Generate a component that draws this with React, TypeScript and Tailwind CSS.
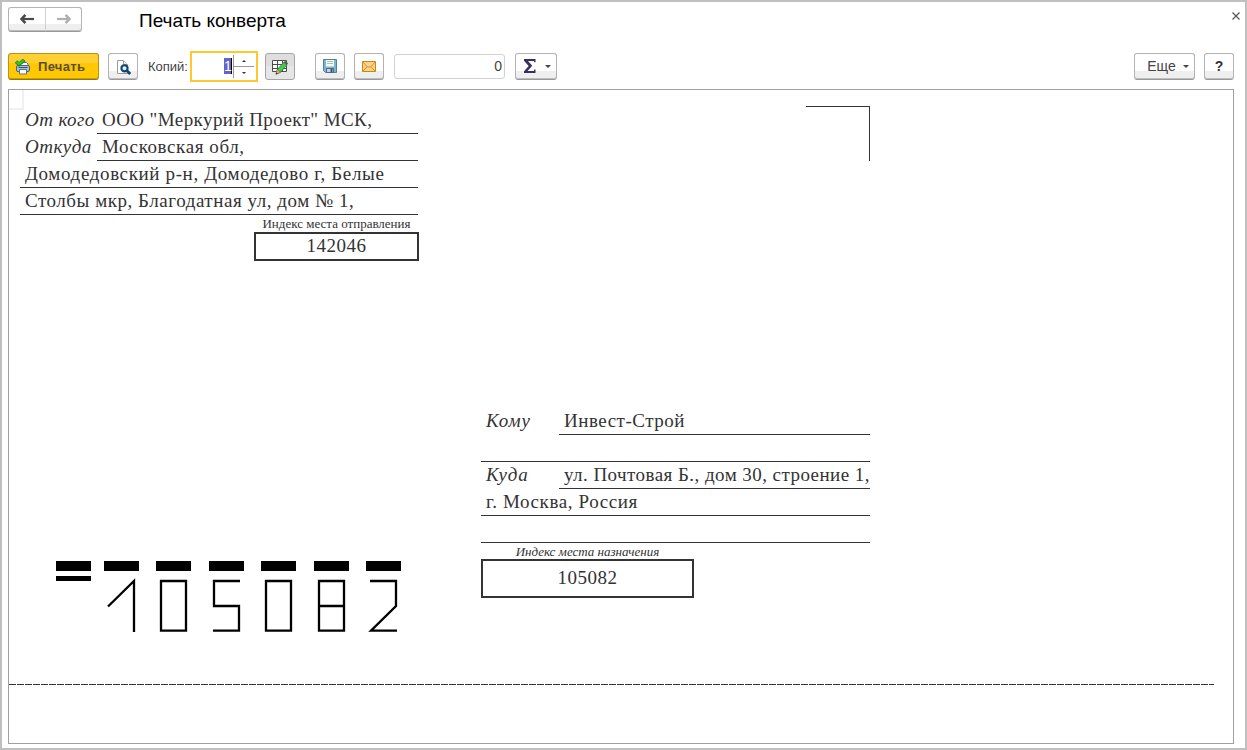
import type { ReactNode } from "react";

const BTN =
  "flex h-[27px] shrink-0 items-center justify-center rounded-[3px] border border-[#b3b3b3] border-b-[#999] bg-[linear-gradient(to_bottom,#fff_0,#fff_70%,#efefef_70%,#efefef_100%)] shadow-[inset_0_-1px_0_#bdbdbd]";

function PrintIcon() {
  return (
    <svg width="16" height="16" viewBox="0 0 16 16" fill="none">
      <path d="M4.5 7V3.5h7l1.5 1.5V7" fill="#fff" stroke="#5d7288" />
      <rect x="1.5" y="6.5" width="13" height="6" rx="1.5" fill="#a9c0d5" stroke="#476581" />
      <path d="M3.5 8.5h9" stroke="#3c556e" />
      <path d="M4.5 10.5h7v4.5h-7z" fill="#fff" stroke="#58708a" />
      <path d="M1 2.5 4 5.3 9.3.8" stroke="#178514" strokeWidth="3.6" />
      <path d="M1.3 2.7 4 5 9 1" stroke="#3fc92a" strokeWidth="1.8" />
    </svg>
  );
}

function PreviewIcon() {
  return (
    <svg width="16" height="16" viewBox="0 0 16 16" fill="none">
      <path d="M2.5 1.5h6l4 4v9h-10z" fill="#fff" stroke="#9a9a9a" />
      <path d="M8.5 1.5v4h4" fill="#eee" stroke="#9a9a9a" />
      <circle cx="9.5" cy="9.3" r="3.1" fill="#e4f0fa" stroke="#104470" strokeWidth="2.1" />
      <path d="m11.8 11.6 3.4 3.4" stroke="#104470" strokeWidth="2.8" />
    </svg>
  );
}

function EditTableIcon() {
  return (
    <svg width="17" height="16" viewBox="0 0 17 16" fill="none" className="-translate-x-px">
      <path d="M1.5 1.5h14v11h-14zM1.5 5.5h14M1.5 9.5h14M6.5 1.5v11M11.5 1.5v11" fill="#fff" stroke="#4c4c4c" />
      <path d="M5 15.2 6.3 10.5 12.8 3.2 16 6 9.3 13.4z" fill="#47c653" stroke="#2b7b34" strokeWidth=".8" />
      <path d="m12.8 3.2 1.3-1.4L17 4.3 16 6z" fill="#4f5a55" />
      <path d="m5 15.2 1.3-4.7 3 2.9z" fill="#e8b087" stroke="#9b6239" strokeWidth=".6" />
      <path d="m5 15.2.5-2 1.3 1.2z" fill="#333" />
    </svg>
  );
}

function SaveIcon() {
  return (
    <svg width="14" height="14" viewBox="0 0 14 14" fill="none">
      <path d="M.5.5h13v13h-11l-2-2z" fill="#7fb5c9" stroke="#4e8298" />
      <path d="M3 1h8v6.5H3z" fill="#f8fcf8" />
      <path d="M4 2.5h6M4 4.5h6" stroke="#9cc4b0" />
      <path d="M3.5 9.5h7v4h-7z" fill="#c9d3df" stroke="#4b6b88" />
      <path d="M7.5 10h2v3h-2z" fill="#31557b" />
    </svg>
  );
}

function MailIcon() {
  return (
    <svg width="14" height="11" viewBox="0 0 14 11" fill="none">
      <path d="M.5.5h13v10H.5z" fill="#fbd489" stroke="#cd8514" />
      <path d="m.8.8 4.4 5.1h3.6L13.2.8M.8 10.2l4.4-4.3M13.2 10.2 8.8 5.9" stroke="#d6922a" />
    </svg>
  );
}

function Caret() {
  return (
    <svg width="6" height="3" viewBox="0 0 6 3">
      <path d="M0 0h6L3 3z" fill="#444" />
    </svg>
  );
}

function NavArrow({ color, flip }: { color: string; flip?: boolean }) {
  return (
    <svg width="14" height="10" viewBox="0 0 14 10" fill="none" className={flip ? "mb-px rotate-180" : "mb-px"}>
      <path d="M1.5 5H14" stroke={color} strokeWidth="2.2" />
      <path d="M5.4.9 1.5 5l3.9 4.1" stroke={color} strokeWidth="2.6" />
    </svg>
  );
}

function TopBar() {
  return (
    <header className="flex h-[29px] items-start pt-[5px]">
      <div className="ml-[6px] flex h-[25px] w-[74px] rounded-[3px] border border-[#b3b3b3] border-b-[#999] bg-[linear-gradient(to_bottom,#fff_0,#fff_70%,#efefef_70%,#efefef_100%)] shadow-[inset_0_-1px_0_#bdbdbd]">
        <button className="flex w-[37px] items-center justify-center border-r border-[#d0d0d0]">
          <NavArrow color="#4a4a4a" />
        </button>
        <button className="flex flex-1 items-center justify-center">
          <NavArrow color="#b0b0b0" flip />
        </button>
      </div>
      <h1 className="ml-[57px] pt-[4px] text-[19px] leading-[20px] whitespace-nowrap text-black">Печать конверта</h1>
      <svg width="8" height="8" viewBox="0 0 8 8" className="mt-[5px] mr-[5px] ml-auto">
        <path d="M.5.5l7 7M7.5.5l-7 7" stroke="#555" strokeWidth="1.2" />
      </svg>
    </header>
  );
}

function Toolbar() {
  return (
    <div className="mt-[20px] flex h-[31px] items-center pr-[11px] pl-[6px] text-[13px] text-[#444]">
      <button className="flex h-[27px] w-[91px] items-center rounded-[3px] border border-[#b79416] border-b-[#927508] bg-[linear-gradient(to_bottom,#ffcf33_0,#ffcf33_38%,#ffc800_38%,#ffc800_100%)] pl-[6px] shadow-[inset_0_-1px_0_#c69e0c]">
        <PrintIcon />
        <span className="ml-[7px] font-bold tracking-[0.3px] text-[#57503a]">Печать</span>
      </button>
      <button className={`${BTN} ml-[9px] w-[30px]`}>
        <PreviewIcon />
      </button>
      <span className="ml-[10px] w-[42px] whitespace-nowrap">Копий:</span>
      <div className="flex h-[31px] w-[68px] justify-end border-2 border-[#ffc82e] bg-white pr-[2px]">
        <span className="mt-[5px] h-[16px] w-[8px] border-r border-black bg-[#6464c8] text-[14px] leading-[17px] text-white">1</span>
        <div className="mt-[2px] ml-px flex h-[23px] w-[21px] flex-col border-l border-[#999]">
          <span className="flex h-[12px] items-center justify-center border-b border-[#999]">
            <svg width="4" height="2" viewBox="0 0 4 2"><path d="M0 2h4L2 0z" fill="#333" /></svg>
          </span>
          <span className="flex flex-1 items-center justify-center">
            <svg width="4" height="2" viewBox="0 0 4 2"><path d="M0 0h4L2 2z" fill="#333" /></svg>
          </span>
        </div>
      </div>
      <button className="ml-[7px] flex h-[27px] w-[30px] items-center justify-center rounded-[3px] border border-[#a4a4a4] bg-[linear-gradient(to_bottom,#dedede_0,#dedede_50%,#e6e6e6_50%,#e6e6e6_100%)]">
        <EditTableIcon />
      </button>
      <button className={`${BTN} ml-[20px] w-[30px] pb-px`}>
        <SaveIcon />
      </button>
      <button className={`${BTN} ml-[9px] w-[30px] pb-px`}>
        <MailIcon />
      </button>
      <div className="ml-[10px] flex h-[25px] w-[111px] items-center justify-end rounded-[3px] border border-[#d2d2d2] pr-[2px] text-[14px]">0</div>
      <button className={`${BTN} ml-[10px] w-[42px] gap-[9px] pl-[2px]`}>
        <svg width="12" height="14" viewBox="0 0 12 14" className="mb-px">
          <path d="M0 0h11.5v3.2H10.3L9.8 2H4l4.2 4.8L3.6 12h6.2l.5-1.4h1.2V14H0v-1.8L4.7 7 0 1.8z" fill="#35305f" />
        </svg>
        <Caret />
      </button>
      <button className={`${BTN} ml-auto w-[61px] gap-[7px] pl-[7px] text-[14px]`}>
        Еще
        <Caret />
      </button>
      <button className={`${BTN} ml-[9px] w-[30px] text-[14px] font-bold text-[#333]`}>?</button>
    </div>
  );
}

interface LineProps {
  label?: string;
  labelClass?: string;
  textClass?: string;
  children?: ReactNode;
}

function Line({ label, labelClass = "", textClass = "", children }: LineProps) {
  return (
    <div className="flex h-[27px] whitespace-nowrap">
      {label && <span className={`${labelClass} shrink-0 pl-[5px] italic`}>{label}</span>}
      <span className={`${textClass} flex-1 border-b border-[#333] pl-[5px]`}>{children}</span>
    </div>
  );
}

function PostalDigits() {
  return (
    <svg width="346" height="72" viewBox="56 561 346 72" fill="none" stroke="#000" strokeWidth="2.3">
      <path
        d="M56 561h35v10H56zM104 561h35v10h-35zM156 561h35v10h-35zM209 561h35v10h-35zM261 561h35v10h-35zM314 561h35v10h-35zM366 561h35v10h-35zM56 576h35v5H56z"
        fill="#000"
        stroke="none"
      />
      <path d="M108 606.5 134 581V632" />
      <path d="M161 581h25v49.7h-25z" />
      <path d="M240 581h-26v25h25v24.7h-26" />
      <path d="M266 581h25v49.7h-25z" />
      <path d="M319 581h25v49.7h-25zM319 606h25" />
      <path d="M370 581h26v25L371 630.7h26" />
    </svg>
  );
}

function Envelope() {
  return (
    <main className="mx-[6px] mt-[7px] mr-[11px] h-[655px] border border-[#a0a0a0] bg-white font-['Liberation_Serif',serif] text-[19px] leading-[25px] text-[#333]">
      <div className="flex h-[315px] items-start">
        <div className="h-[20px] w-[15px] shrink-0 border-r-2 border-b-2 border-[#f0f0f0]" />
        <section className="-ml-[4px] w-[398px] shrink-0 pt-[17px]">
          <Line label="От кого" labelClass="w-[77px] tracking-[0.42px]" textClass="tracking-[0.42px]">
            ООО "Меркурий Проект" МСК,
          </Line>
          <Line label="Откуда" labelClass="w-[77px] tracking-[0.48px]" textClass="tracking-[0.6px]">
            Московская обл,
          </Line>
          <Line textClass="tracking-[0.63px]">Домодедовский р-н, Домодедово г, Белые</Line>
          <Line textClass="tracking-[0.54px]">Столбы мкр, Благодатная ул, дом № 1,</Line>
          <div className="-mr-px ml-[234px] text-center">
            <p className="h-[17px] text-[13px] leading-[18px]">Индекс места отправления</p>
            <p className="h-[29px] border-2 border-[#333] leading-[23px] tracking-[0.5px]">142046</p>
          </div>
        </section>
        <div className="mt-[16px] ml-[388px] h-[55px] w-[64px] border-t border-r border-[#333]" />
      </div>
      <div className="flex h-[279px] items-start">
        <div className="mt-[156px] ml-[47px] shrink-0">
          <PostalDigits />
        </div>
        <section className="ml-[79px] w-[389px] shrink-0 pt-[3px]">
          <Line label="Кому" labelClass="w-[78px] tracking-[0.9px]" textClass="tracking-[0.5px]">Инвест-Строй</Line>
          <Line />
          <Line label="Куда" labelClass="w-[78px] tracking-[0.8px]" textClass="tracking-[0.45px]">
            ул. Почтовая Б., дом 30, строение 1,
          </Line>
          <Line textClass="tracking-[0.6px]">г. Москва, Россия</Line>
          <Line />
          <div className="w-[213px] text-center">
            <p className="h-[16px] text-[13px] leading-[17px] italic">Индекс места назначения</p>
            <p className="h-[39px] border-2 border-[#333] leading-[33px] tracking-[0.5px]">105082</p>
          </div>
        </section>
      </div>
      <div className="h-px w-[1205px] bg-[repeating-linear-gradient(to_right,#333_0,#333_7px,#fff_7px,#fff_8px)]" />
    </main>
  );
}

export default function App() {
  return (
    <div className="h-[750px] w-[1247px] overflow-hidden border-2 border-[#bfbfbf] bg-white font-['Liberation_Sans',sans-serif]">
      <TopBar />
      <Toolbar />
      <Envelope />
    </div>
  );
}
